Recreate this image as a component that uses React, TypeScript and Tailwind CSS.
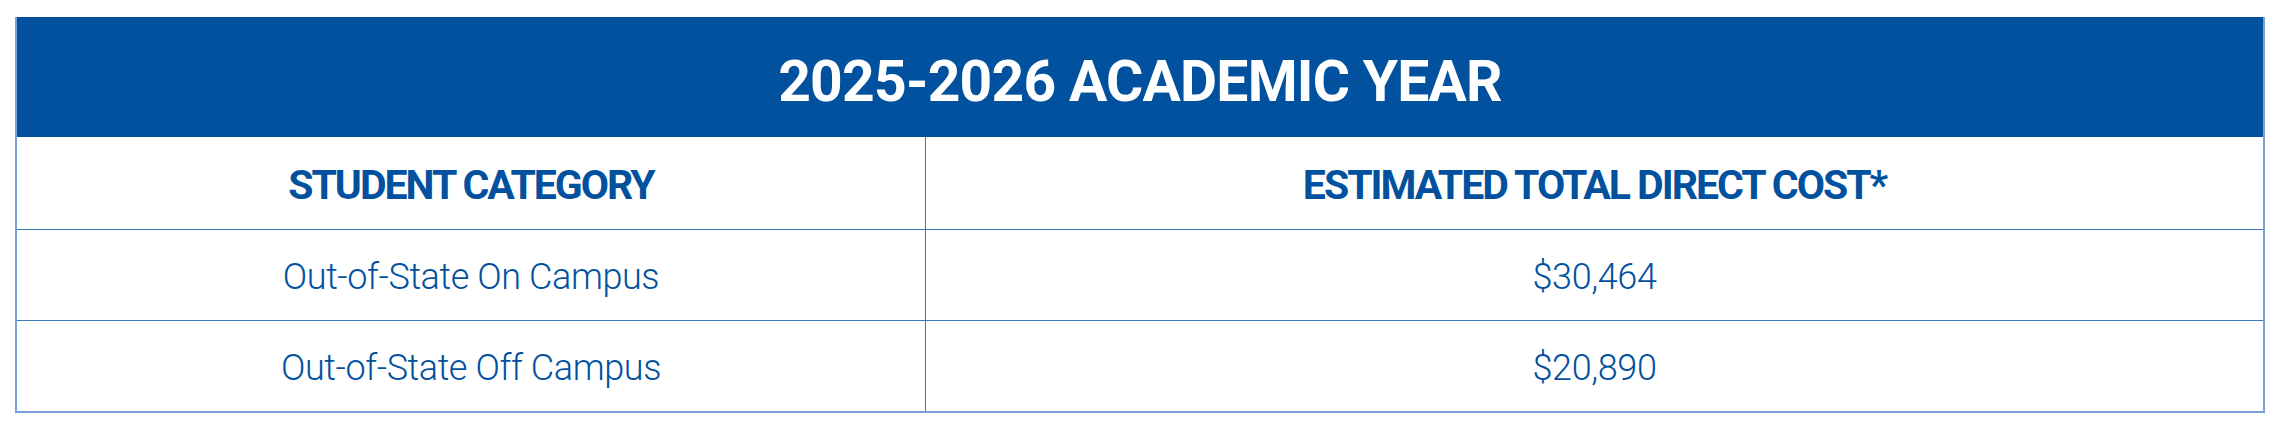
const rows = [
  { category: 'Out-of-State On Campus', cost: '$30,464' },
  { category: 'Out-of-State Off Campus', cost: '$20,890' },
];

export default function App() {
  return (
    <div className="min-h-screen bg-white pl-[15px] pt-[17px] font-['Roboto',sans-serif]">
      <div className="w-[2250px] border-x-2 border-b-2 border-[#79a1d6]">
        {/* Title bar */}
        <div className="flex h-[120px] items-center justify-center bg-[#02519f] pt-[8px]">
          <h1 className="text-[57px] font-bold leading-none tracking-[-0.75px] text-white">
            2025-2026 ACADEMIC YEAR
          </h1>
        </div>

        {/* Column headings */}
        <div className="grid h-[92px] grid-cols-[909px_1fr] text-[#02519f]">
          <div className="flex items-center justify-center border-r border-[#3f78bf] pt-[4px]">
            <span className="text-[41px] font-bold leading-none tracking-[-2px]">
              STUDENT CATEGORY
            </span>
          </div>
          <div className="flex items-center justify-center pt-[4px]">
            <span className="text-[41px] font-bold leading-none tracking-[-2px]">
              ESTIMATED TOTAL DIRECT COST*
            </span>
          </div>
        </div>

        {/* Data rows */}
        {rows.map((r) => (
          <div
            key={r.category}
            className="grid h-[91px] grid-cols-[909px_1fr] border-t border-[#3f78bf] text-[#02519f]"
          >
            <div className="flex items-center justify-center border-r border-[#3f78bf] pt-[4px]">
              <span className="text-[36px] font-light leading-none tracking-[-0.4px]">
                {r.category}
              </span>
            </div>
            <div className="flex items-center justify-center pt-[4px]">
              <span className="text-[36px] font-light leading-none tracking-[-0.4px]">
                {r.cost}
              </span>
            </div>
          </div>
        ))}
      </div>
    </div>
  );
}
